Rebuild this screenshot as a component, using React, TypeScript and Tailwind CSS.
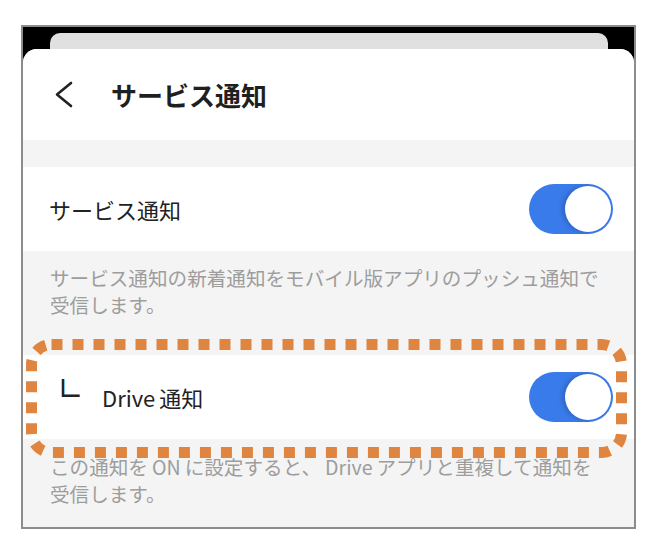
import React from "react";

function Toggle() {
  return (
    <div className="w-[84px] h-[50px] rounded-full bg-[#3a7bec] p-[2px] flex justify-end shrink-0">
      <div className="w-[46px] h-[46px] rounded-full bg-white shadow-[-3px_0_5px_rgba(0,0,0,0.18)]" />
    </div>
  );
}

export default function App() {
  return (
    <div
      className="w-[662px] h-[554px] bg-white pt-[25px] pl-[21px]"
      style={{ fontFamily: '"Noto Sans CJK JP", "Noto Sans", sans-serif' }}
    >
      <div className="w-[615px] h-[504px] border-2 border-[#8c8c8c] bg-black flex flex-col overflow-hidden">
        <div className="h-[22px] shrink-0 flex pt-[6px] pl-[27px] pr-[26px]">
          <div className="flex-1 bg-[#e0e0e0] rounded-t-[10px]" />
        </div>
        <div className="flex-1 bg-[#f4f4f4] rounded-t-[14px] overflow-hidden flex flex-col">
          <div className="h-[91px] shrink-0 bg-white flex items-center">
            <svg className="ml-[31px]" width="19" height="27" viewBox="0 0 19 27" fill="none">
              <path d="M17 2 L3 13.5 L17 25" stroke="#222" strokeWidth="2.6" strokeLinecap="round" strokeLinejoin="round" />
            </svg>
            <span className="ml-[38px] text-[26px] font-bold text-[#1f1f1f] leading-none">サービス通知</span>
          </div>
          <div className="h-[27px] shrink-0" />
          <div className="h-[84px] shrink-0 bg-white flex items-center justify-between pl-[26px] pr-[21px]">
            <span className="text-[22px] text-[#222] leading-none">サービス通知</span>
            <Toggle />
          </div>
          <div className="h-[104px] shrink-0 pt-[13px] pl-[27px] text-[19.6px] leading-[27px] text-[#9d9d9d] whitespace-nowrap">
            サービス通知の新着通知をモバイル版アプリのプッシュ通知で
            <br />
            受信します。
          </div>
          <div className="relative h-[84px] shrink-0 bg-white flex items-center justify-between pl-[24px] pr-[21px]">
            <div className="flex items-center">
              <span className="text-[32px] leading-none text-[#222] font-bold -mt-[6px] [-webkit-text-stroke:1.2px_#222]">└</span>
              <span className="ml-[23px] text-[22px] text-[#222] leading-none">
                Drive<span className="ml-[4px]">通知</span>
              </span>
            </div>
            <Toggle />
            <svg
              className="absolute left-[3px] top-[-16px] pointer-events-none"
              width="601"
              height="119"
              viewBox="0 0 601 119"
              fill="none"
            >
              <rect
                x="5.5"
                y="5.5"
                width="590"
                height="108"
                rx="20"
                stroke="#e08540"
                strokeWidth="11"
                strokeDasharray="11 10"
              />
            </svg>
          </div>
          <div className="flex-1 pt-[14px] pl-[27px] text-[19.6px] leading-[27px] text-[#9d9d9d] whitespace-nowrap">
            この通知を<span className="mx-[4px]">ON</span>に設定すると、<span className="mx-[4px]">Drive</span>アプリと重複して通知を
            <br />
            受信します。
          </div>
        </div>
      </div>
    </div>
  );
}
